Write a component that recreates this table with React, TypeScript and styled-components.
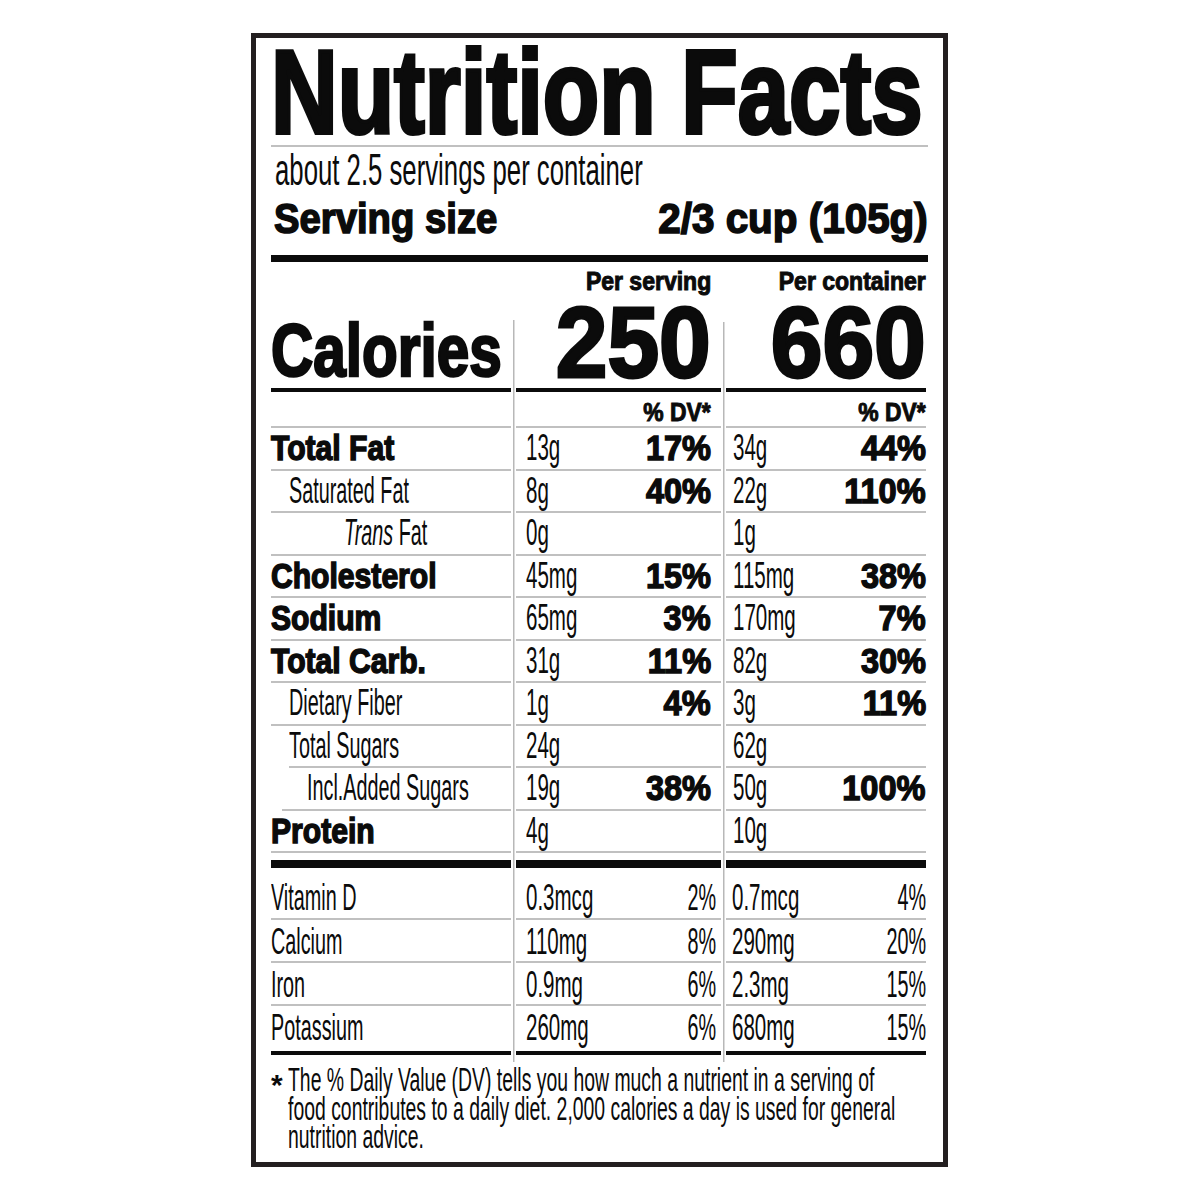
import React from "react";
import styled, { createGlobalStyle, css } from "styled-components";

const INK = "#0b0b0b";
const HAIR = "#c0c0c0";

type Line = "thin" | "heavy" | "bar" | "none";
const RULES: Record<Line, string> = {
  thin: `2px solid ${HAIR}`,
  heavy: `4px solid ${INK}`,
  bar: `8px solid ${INK}`,
  none: "none",
};

type Nutrient = {
  name: string;
  bold?: boolean;
  trans?: boolean;
  indent?: number;
  rule?: number;
  serving: [string, string?];
  container: [string, string?];
};

const nutrients: Nutrient[] = [
  { name: "Total Fat", bold: true, serving: ["13g", "17%"], container: ["34g", "44%"] },
  { name: "Saturated Fat", indent: 18, serving: ["8g", "40%"], container: ["22g", "110%"] },
  { name: "Fat", trans: true, indent: 73, serving: ["0g"], container: ["1g"] },
  { name: "Cholesterol", bold: true, serving: ["45mg", "15%"], container: ["115mg", "38%"] },
  { name: "Sodium", bold: true, serving: ["65mg", "3%"], container: ["170mg", "7%"] },
  { name: "Total Carb.", bold: true, serving: ["31g", "11%"], container: ["82g", "30%"] },
  { name: "Dietary Fiber", indent: 18, serving: ["1g", "4%"], container: ["3g", "11%"] },
  { name: "Total Sugars", indent: 18, rule: 18, serving: ["24g"], container: ["62g"] },
  { name: "Incl.Added Sugars", indent: 36, rule: 11, serving: ["19g", "38%"], container: ["50g", "100%"] },
  { name: "Protein", bold: true, serving: ["4g"], container: ["10g"] },
];

type Vitamin = {
  name: string;
  h: number;
  pad: number;
  line: Line;
  serving: [string, string];
  container: [string, string];
};

const vitamins: Vitamin[] = [
  { name: "Vitamin D", h: 52, pad: 11, line: "thin", serving: ["0.3mcg", "2%"], container: ["0.7mcg", "4%"] },
  { name: "Calcium", h: 43, pad: 3, line: "thin", serving: ["110mg", "8%"], container: ["290mg", "20%"] },
  { name: "Iron", h: 43, pad: 3, line: "thin", serving: ["0.9mg", "6%"], container: ["2.3mg", "15%"] },
  { name: "Potassium", h: 49, pad: 3, line: "heavy", serving: ["260mg", "6%"], container: ["680mg", "15%"] },
];

const GlobalStyle = createGlobalStyle`
  html, body { margin: 0; padding: 0; background: #fff; }
  body {
    font-family: "Liberation Sans", Arial, Helvetica, sans-serif;
    color: ${INK};
  }
`;

// condensed look: Liberation has no narrow cut, so squeeze horizontally
const squeeze = (scale: number, origin: "left" | "right" = "left") => css`
  display: inline-block;
  white-space: nowrap;
  transform: scaleX(${scale});
  transform-origin: ${origin} center;
`;

const Page = styled.main`
  width: 1200px;
  height: 1200px;
  box-sizing: border-box;
  padding: 33px 0 0 251px;
`;

const Panel = styled.section`
  width: 697px;
  box-sizing: border-box;
  border: 5px solid #231f20;
  padding: 4px 15px 10px;
  background: #fff;
`;

const Title = styled.h1`
  margin: 0;
  padding-bottom: 3px;
  border-bottom: 2px solid ${HAIR};
  font-size: 119px;
  line-height: 100px;
  font-weight: 700;
`;

const TitleText = styled.span`
  ${squeeze(0.776)}
  -webkit-text-stroke: 4px ${INK};
`;

const Servings = styled.p`
  margin: 5px 0 0;
  padding-left: 4px;
  font-size: 44px;
  line-height: 36px;
`;

const ServingsText = styled.span`
  ${squeeze(0.585)}
`;

const ServingRow = styled.div`
  margin-top: 10px;
  display: flex;
  justify-content: space-between;
  padding-left: 3px;
  font-size: 43px;
  line-height: 40px;
  font-weight: 700;
`;

const ServingText = styled.span<{ $right?: boolean }>`
  ${(p) => squeeze(p.$right ? 0.94 : 0.89, p.$right ? "right" : "left")}
  -webkit-text-stroke: 1.6px ${INK};
`;

const HeavyRule = styled.div`
  margin-top: 17px;
  height: 7px;
  background: ${INK};
`;

const Row = styled.div<{ $h: number }>`
  display: grid;
  grid-template-columns: 240px 205px 200px;
  grid-template-rows: ${(p) => p.$h}px;
  column-gap: 5px;
  height: ${(p) => p.$h}px;
`;

const ColumnHeads = styled(Row)`
  margin-top: 5px;
  font-size: 25px;
  line-height: 28px;
  font-weight: 700;
`;

const HeadCell = styled.div<{ $pr: number }>`
  text-align: right;
  padding-right: ${(p) => p.$pr}px;
`;

const HeadText = styled.span`
  ${squeeze(0.92, "right")}
  -webkit-text-stroke: 1px ${INK};
`;

const Table = styled.div`
  margin-top: 7px;
  background-image: linear-gradient(#b8b8b8, #b8b8b8), linear-gradient(#b8b8b8, #b8b8b8);
  background-repeat: no-repeat;
  background-size: 1.5px calc(100% - 18px), 1.5px calc(100% - 20px);
  background-position: 241.75px 100%, 451.75px 100%;
`;

type CellProps = { $line?: Line; $pad?: number; $lh?: number };

const cellBase = css<CellProps>`
  box-sizing: border-box;
  height: 100%;
  min-width: 0;
  display: flex;
  align-items: flex-start;
  padding-top: ${(p) => p.$pad ?? 0}px;
  line-height: ${(p) => p.$lh ?? 37.5}px;
  border-bottom: ${(p) => RULES[p.$line ?? "thin"]};
  white-space: nowrap;
`;

const NameCell = styled.div<CellProps & { $indent?: number; $rule?: number }>`
  ${cellBase}
  margin-left: ${(p) => p.$rule ?? 0}px;
  padding-left: ${(p) => (p.$indent ?? 0) - (p.$rule ?? 0)}px;
`;

const ValueCell = styled.div<CellProps & { $pl?: number; $pr?: number; $end?: boolean }>`
  ${cellBase}
  justify-content: ${(p) => (p.$end ? "flex-end" : "flex-start")};
  padding-left: ${(p) => p.$pl ?? 0}px;
  padding-right: ${(p) => p.$pr ?? 0}px;
`;

const CaloriesWord = styled.span`
  ${squeeze(0.79)}
  font-size: 74px;
  font-weight: 700;
  -webkit-text-stroke: 2.6px ${INK};
`;

const CaloriesValue = styled.span`
  ${squeeze(0.93, "right")}
  font-size: 100px;
  font-weight: 700;
  -webkit-text-stroke: 3px ${INK};
`;

const DvText = styled.span`
  ${squeeze(0.88, "right")}
  font-size: 26px;
  font-weight: 700;
  -webkit-text-stroke: 1px ${INK};
`;

const NutrientName = styled.span<{ $bold?: boolean }>`
  ${(p) => squeeze(p.$bold ? 0.86 : 0.55)}
  font-size: ${(p) => (p.$bold ? 35 : 36)}px;
  font-weight: ${(p) => (p.$bold ? 700 : 400)};
  -webkit-text-stroke: ${(p) => (p.$bold ? `1.5px ${INK}` : "0")};
`;

const TransWord = styled.em`
  font-style: italic;
`;

const Amount = styled.span`
  ${squeeze(0.57)}
  flex: 1 1 0;
  min-width: 0;
  font-size: 36px;
`;

const Percent = styled.span<{ $bold?: boolean }>`
  ${(p) => squeeze(p.$bold ? 0.93 : 0.55, "right")}
  flex: none;
  margin-left: auto;
  font-size: ${(p) => (p.$bold ? 35 : 36)}px;
  font-weight: ${(p) => (p.$bold ? 700 : 400)};
  -webkit-text-stroke: ${(p) => (p.$bold ? `1.4px ${INK}` : "0")};
`;

const Footnote = styled.footer`
  margin-top: 4px;
  display: flex;
  font-size: 33px;
  line-height: 28.5px;
`;

const Star = styled.span`
  flex: none;
  width: 17px;
  padding-top: 5px;
  font-size: 30px;
  font-weight: 700;
`;

const FootText = styled.p`
  margin: 0;
  ${squeeze(0.588)}
`;

const App: React.FC = () => {
  return (
    <Page>
      <GlobalStyle />
      <Panel>
        <Title>
          <TitleText>Nutrition Facts</TitleText>
        </Title>
        <Servings>
          <ServingsText>about 2.5 servings per container</ServingsText>
        </Servings>
        <ServingRow>
          <ServingText>Serving size</ServingText>
          <ServingText $right>2/3 cup (105g)</ServingText>
        </ServingRow>
        <HeavyRule />

        <ColumnHeads $h={28}>
          <div />
          <HeadCell $pr={10}>
            <HeadText>Per serving</HeadText>
          </HeadCell>
          <HeadCell $pr={0}>
            <HeadText>Per container</HeadText>
          </HeadCell>
        </ColumnHeads>

        <Table>
          <Row $h={90}>
            <NameCell $line="heavy" $lh={80} $pad={9}>
              <CaloriesWord>Calories</CaloriesWord>
            </NameCell>
            <ValueCell $line="heavy" $lh={80} $pr={10} $end>
              <CaloriesValue>250</CaloriesValue>
            </ValueCell>
            <ValueCell $line="heavy" $lh={80} $end>
              <CaloriesValue>660</CaloriesValue>
            </ValueCell>
          </Row>

          <Row $h={36}>
            <NameCell />
            <ValueCell $lh={28} $pad={6} $pr={10} $end>
              <DvText>% DV*</DvText>
            </ValueCell>
            <ValueCell $lh={28} $pad={6} $end>
              <DvText>% DV*</DvText>
            </ValueCell>
          </Row>

          {nutrients.map((n) => (
            <Row $h={42.5} key={n.name + n.serving[0]}>
              <NameCell $indent={n.indent} $rule={n.rule} $pad={1}>
                <NutrientName $bold={n.bold}>
                  {n.trans ? (
                    <>
                      <TransWord>Trans</TransWord> {n.name}
                    </>
                  ) : (
                    n.name
                  )}
                </NutrientName>
              </NameCell>
              <ValueCell $pad={1} $pl={10} $pr={10}>
                <Amount>{n.serving[0]}</Amount>
                {n.serving[1] && <Percent $bold>{n.serving[1]}</Percent>}
              </ValueCell>
              <ValueCell $pad={1} $pl={7}>
                <Amount>{n.container[0]}</Amount>
                {n.container[1] && <Percent $bold>{n.container[1]}</Percent>}
              </ValueCell>
            </Row>
          ))}

          <Row $h={15}>
            <NameCell $line="bar" />
            <ValueCell $line="bar" />
            <ValueCell $line="bar" />
          </Row>

          {vitamins.map((v) => (
            <Row $h={v.h} key={v.name}>
              <NameCell $line={v.line} $pad={v.pad}>
                <NutrientName>{v.name}</NutrientName>
              </NameCell>
              <ValueCell $line={v.line} $pad={v.pad} $pl={10} $pr={5}>
                <Amount>{v.serving[0]}</Amount>
                <Percent>{v.serving[1]}</Percent>
              </ValueCell>
              <ValueCell $line={v.line} $pad={v.pad} $pl={6}>
                <Amount>{v.container[0]}</Amount>
                <Percent>{v.container[1]}</Percent>
              </ValueCell>
            </Row>
          ))}

          <Row $h={7} />
        </Table>

        <Footnote>
          <Star>*</Star>
          <FootText>
            The % Daily Value (DV) tells you how much a nutrient in a serving of
            <br />
            food contributes to a daily diet. 2,000 calories a day is used for general
            <br />
            nutrition advice.
          </FootText>
        </Footnote>
      </Panel>
    </Page>
  );
};

export default App;
